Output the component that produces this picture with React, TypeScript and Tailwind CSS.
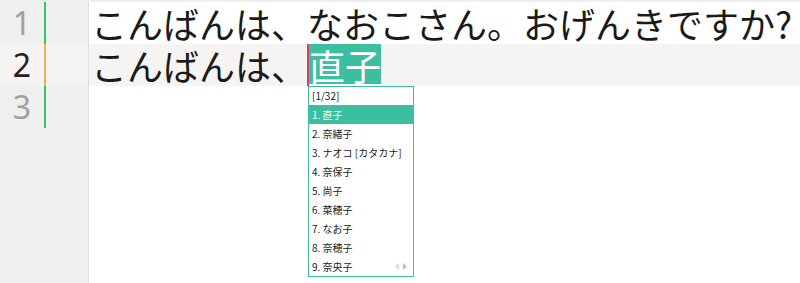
const CANDIDATES = ['直子', '奈緒子', 'ナオコ [カタカナ]', '奈保子', '尚子', '菜穂子', 'なお子', '奈穂子', '奈央子']

const JP = "font-['Noto_Sans_CJK_JP','Noto_Sans',sans-serif]"

function Pager() {
  return (
    <div className="absolute right-[6px] top-0 flex h-full items-center gap-[4px]">
      <svg width="4" height="7" viewBox="0 0 4 7">
        <path d="M4 0 L0 3.5 L4 7 Z" fill="#dadada" />
      </svg>
      <svg width="4" height="7" viewBox="0 0 4 7">
        <path d="M0 0 L4 3.5 L0 7 Z" fill="#bdbdbd" />
      </svg>
    </div>
  )
}

function CandidateWindow() {
  return (
    <div className={`absolute -left-[1px] top-full z-10 w-[106px] border border-[#3cbfa1] bg-white text-[10px] leading-[19px] text-[#222] ${JP}`}>
      <div className="h-[18px] px-[3px] leading-[18px]">[1/32]</div>
      {CANDIDATES.map((c, i) => (
        <div
          key={c}
          className={`relative h-[19px] px-[3px] ${i === 0 ? 'bg-[#3cbfa1] text-white' : ''}`}
        >
          {i + 1}. {c}
          {i === CANDIDATES.length - 1 && <Pager />}
        </div>
      ))}
    </div>
  )
}

function GutterRow({ n, active, bar }: { n: number; active?: boolean; bar: string }) {
  return (
    <div className={`flex h-[42px] ${active ? 'bg-[#f5f4f2]' : ''}`}>
      <div
        className={`w-[44px] text-center font-['Noto_Sans',sans-serif] text-[32px] leading-[42px] ${
          active ? 'text-[#222]' : 'text-[#a0a0a0]'
        }`}
      >
        {n}
      </div>
      <div className={`w-[2px] ${bar}`} />
    </div>
  )
}

export default function App() {
  return (
    <div className="flex h-[283px] w-[800px] flex-col overflow-hidden bg-white">
      <div className="h-[2px] bg-[#efefef]" />
      <div className="flex flex-1">
        {/* gutter */}
        <div className="w-[89px] border-r border-[#dedede] bg-[#efefef]">
          <GutterRow n={1} bar="bg-[#35c46b]" />
          <GutterRow n={2} active bar="bg-[#f5b24a]" />
          <GutterRow n={3} bar="bg-[#35c46b]" />
        </div>

        {/* editor */}
        <div className={`flex-1 text-[36px] leading-[42px] text-[#1a1a1a] ${JP}`}>
          <div className="h-[42px] whitespace-nowrap pl-[2px]">こんばんは、なおこさん。おげんきですか?</div>
          <div className="h-[42px] whitespace-nowrap bg-[#f5f4f2] pl-[2px]">
            こんばんは、
            <span className="relative inline-block h-[42px] border-l-2 border-[#d2416a] bg-[#3cbfa1] align-top text-white">
              <span className="inline-block border-b-2 border-white leading-[38px]">直子</span>
              <CandidateWindow />
            </span>
          </div>
        </div>
      </div>
    </div>
  )
}
